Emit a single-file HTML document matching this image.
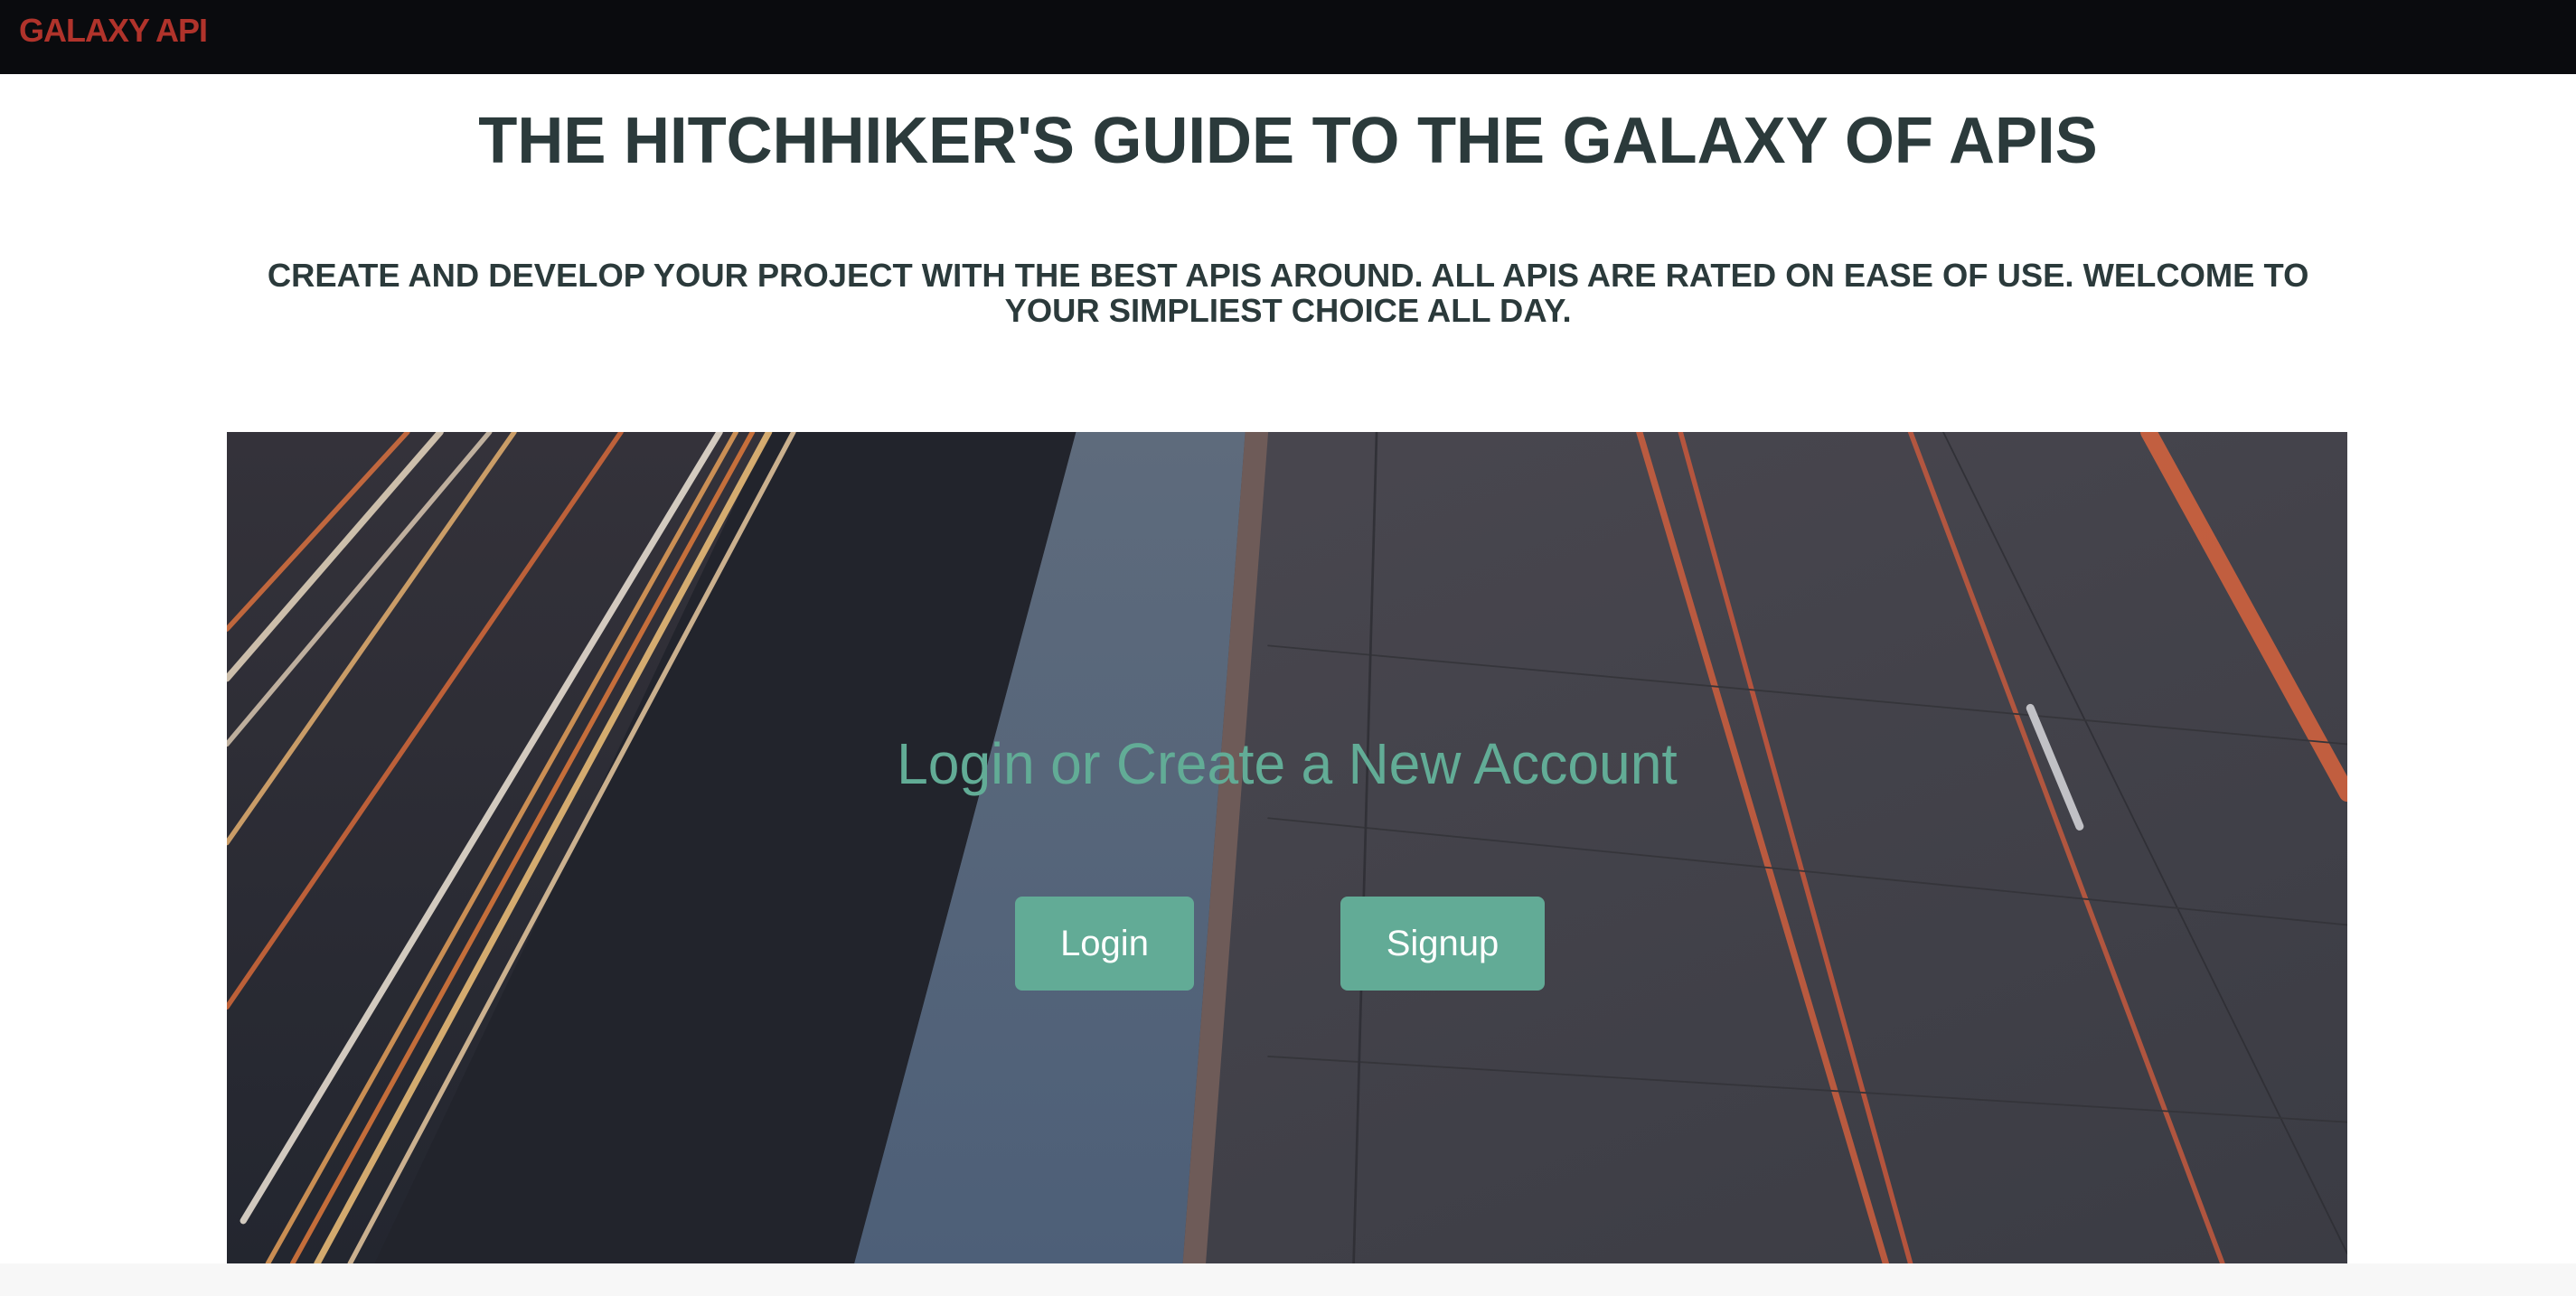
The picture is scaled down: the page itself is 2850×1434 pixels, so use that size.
<!DOCTYPE html>
<html><head><meta charset="utf-8">
<style>
html,body{margin:0;padding:0;width:2850px;height:1434px;overflow:hidden;background:#fff;font-family:"Liberation Sans",sans-serif}
.nav{position:absolute;left:0;top:0;width:2850px;height:82px;background:#0a0b0e}
.logo{position:absolute;left:21px;top:13px;font-size:36px;font-weight:bold;color:#b0332b;letter-spacing:-1px}
.t1{position:absolute;left:0;width:2850px;top:106px;text-align:center;font-size:72px;font-weight:bold;color:#2b3a3b;line-height:100px}
.t1 span{display:inline-block;transform:scaleX(0.98)}
.t2{position:absolute;left:0;width:2850px;top:285px;text-align:center;font-size:36px;font-weight:bold;color:#2b3a3b;line-height:39px}
.t2 span{display:inline-block;transform:scaleX(1.01)}
.hero{position:absolute;left:251px;top:478px;width:2346px;height:920px;overflow:hidden}
.h{position:absolute;left:0;width:2346px;top:322px;text-align:center;font-size:64px;color:#62ac96;line-height:90px}
.h span{display:inline-block;transform:scaleX(0.975)}
.btn{position:absolute;top:992px;height:104px;background:#62ab96;border-radius:8px;color:#fff;font-size:40px;line-height:104px;text-align:center}
.foot{position:absolute;left:0;top:1398px;width:2850px;height:36px;background:#f7f7f7}
</style></head><body>
<div class="nav"><div class="logo">GALAXY API</div></div>
<div class="t1"><span>THE HITCHHIKER'S GUIDE TO THE GALAXY OF APIS</span></div>
<div class="t2"><span>CREATE AND DEVELOP YOUR PROJECT WITH THE BEST APIS AROUND. ALL APIS ARE RATED ON EASE OF USE. WELCOME TO<br>YOUR SIMPLIEST CHOICE ALL DAY.</span></div>
<div class="hero">
<svg width="2346" height="920" viewBox="0 0 1291 506" preserveAspectRatio="none">
<defs>
<linearGradient id="rd" x1="0" y1="0" x2="1" y2="1"><stop offset="0" stop-color="#4d4a52"/><stop offset="1" stop-color="#3b3c44"/></linearGradient>
<linearGradient id="lf" x1="0" y1="0" x2="0" y2="1"><stop offset="0" stop-color="#34323a"/><stop offset="1" stop-color="#23262f"/></linearGradient>
<linearGradient id="cb" x1="0" y1="0" x2="0" y2="1"><stop offset="0" stop-color="#5e6b7c"/><stop offset="1" stop-color="#4d5f78"/></linearGradient>
</defs>
<rect width="1291" height="506" fill="url(#rd)"/>
<polygon points="0,0 517,0 382,506 0,506" fill="url(#lf)"/>
<polygon points="330,0 517,0 382,506 90,506" fill="#22242c"/>
<polygon points="517,0 620,0 582,506 382,506" fill="url(#cb)"/>
<polygon points="620,0 634,0 596,506 582,506" fill="#6e5b58"/>
<g stroke-linecap="round" fill="none" opacity="0.85">
<line x1="110" y1="0" x2="0" y2="120" stroke="#d9713f" stroke-width="3"/>
<line x1="130" y1="0" x2="0" y2="150" stroke="#e8d8c0" stroke-width="4"/>
<line x1="160" y1="0" x2="0" y2="190" stroke="#d8c6b0" stroke-width="3"/>
<line x1="175" y1="0" x2="0" y2="250" stroke="#e5b070" stroke-width="3"/>
<line x1="240" y1="0" x2="0" y2="350" stroke="#d66a3a" stroke-width="3"/>
<line x1="300" y1="0" x2="10" y2="480" stroke="#f0e6d8" stroke-width="4"/>
<line x1="310" y1="0" x2="25" y2="506" stroke="#e6a05a" stroke-width="3"/>
<line x1="320" y1="0" x2="40" y2="506" stroke="#e07a3c" stroke-width="3"/>
<line x1="330" y1="0" x2="55" y2="506" stroke="#f2c27a" stroke-width="4"/>
<line x1="345" y1="0" x2="75" y2="506" stroke="#e8c9a0" stroke-width="3"/>
<line x1="860" y1="0" x2="1010" y2="506" stroke="#cf5f3e" stroke-width="4"/>
<line x1="885" y1="0" x2="1025" y2="506" stroke="#c9583c" stroke-width="3"/>
<line x1="1025" y1="0" x2="1215" y2="506" stroke="#c55a3e" stroke-width="3"/>
<line x1="1170" y1="0" x2="1291" y2="220" stroke="#d8643e" stroke-width="10"/>
<line x1="1045" y1="0" x2="1291" y2="500" stroke="#2e2e34" stroke-width="1"/>
<line x1="634" y1="130" x2="1291" y2="190" stroke="#333338" stroke-width="1"/>
<line x1="634" y1="235" x2="1291" y2="300" stroke="#333338" stroke-width="1"/>
<line x1="634" y1="380" x2="1291" y2="420" stroke="#333338" stroke-width="1"/>
<line x1="700" y1="0" x2="686" y2="506" stroke="#2e2e34" stroke-width="1.5"/>
<line x1="1098" y1="168" x2="1128" y2="240" stroke="#d8d8dc" stroke-width="5"/>
</g>
</svg>
<div class="h"><span>Login or Create a New Account</span></div>
</div>
<div class="btn" style="left:1123px;width:198px">Login</div>
<div class="btn" style="left:1483px;width:226px">Signup</div>
<div class="foot"></div>
</body></html>
